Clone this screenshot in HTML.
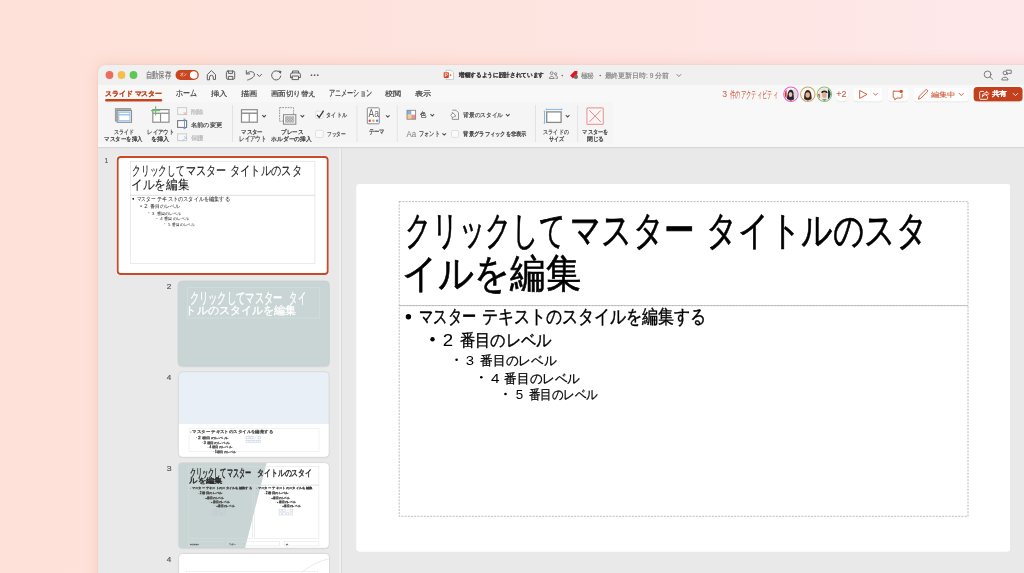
<!DOCTYPE html>
<html><head><meta charset="utf-8">
<style>
html,body{margin:0;padding:0;width:1024px;height:573px;overflow:hidden}
body{background:linear-gradient(90deg,#fee2d9 0%,#fee4df 50%,#fee8ea 100%);font-family:"Liberation Sans",sans-serif;position:relative}
#win{position:absolute;left:98px;top:65px;width:960px;height:540px;border-radius:8px;background:#e9e9e9;box-shadow:0 0 2px 0 rgba(200,100,70,0.22),0 0 14px 2px rgba(220,120,90,0.16)}
svg{position:absolute;left:0;top:0;will-change:transform}
text{font-family:"Liberation Sans",sans-serif}
</style></head>
<body>
<div id="win"></div>
<svg width="1024" height="573" viewBox="0 0 1024 573">
<defs>
<clipPath id="wclip"><rect x="98" y="65" width="960" height="540" rx="8"/></clipPath>
<filter id="bsh" x="-20%" y="-30%" width="140%" height="170%"><feDropShadow dx="0" dy="0.5" stdDeviation="0.6" flood-color="#000" flood-opacity="0.18"/></filter>
<filter id="soft" x="-10%" y="-60%" width="120%" height="220%"><feGaussianBlur stdDeviation="2.2"/></filter>
<filter id="tsh" x="-5%" y="-5%" width="110%" height="112%"><feDropShadow dx="0" dy="0.4" stdDeviation="0.5" flood-color="#000" flood-opacity="0.16"/></filter>
<g id="sm">
<rect x="0" y="0" width="653.5" height="367.4" rx="3" fill="#fff"/>
<rect x="42.7" y="17.6" width="568.8" height="104" fill="none" stroke="#b4b4b4" stroke-width="0.9" stroke-dasharray="2 1.2"/>
<rect x="42.7" y="121.6" width="568.8" height="210.7" fill="none" stroke="#b4b4b4" stroke-width="0.9" stroke-dasharray="2 1.2"/>
<circle cx="51.9" cy="132.8" r="2.7" fill="#000"/>
<circle cx="76" cy="155.3" r="2.2" fill="#000"/>
<circle cx="100.1" cy="175.7" r="1.3" fill="#000"/>
<circle cx="124.8" cy="193.3" r="1.3" fill="#000"/>
<circle cx="149" cy="210" r="1.3" fill="#000"/>
<text x="48.70" y="59.60" font-size="39.70" textLength="160.30" lengthAdjust="spacingAndGlyphs" fill="#000000" stroke="#000000" stroke-width="0.65">クリックして</text>
<text x="213.54" y="59.60" font-size="39.70" textLength="124.72" lengthAdjust="spacingAndGlyphs" fill="#000000" stroke="#000000" stroke-width="0.65">マスター</text>
<text x="349.78" y="59.60" font-size="39.70" textLength="221.31" lengthAdjust="spacingAndGlyphs" fill="#000000" stroke="#000000" stroke-width="0.65">タイトルのスタ</text>
<text x="45.52" y="102.60" font-size="39.70" textLength="178.90" lengthAdjust="spacingAndGlyphs" fill="#000000" stroke="#000000" stroke-width="0.65">イルを編集</text>
<text x="62.58" y="139.40" font-size="19.20" textLength="56.99" lengthAdjust="spacingAndGlyphs" fill="#000000" stroke="#000000" stroke-width="0.4">マスター</text>
<text x="125.80" y="139.40" font-size="19.20" textLength="223.76" lengthAdjust="spacingAndGlyphs" fill="#000000" stroke="#000000" stroke-width="0.4">テキストのスタイルを編集する</text>
<text x="86.17" y="161.90" font-size="16.70" textLength="10.40" lengthAdjust="spacingAndGlyphs" fill="#000000">2</text>
<text x="103.05" y="161.90" font-size="16.70" textLength="91.91" lengthAdjust="spacingAndGlyphs" fill="#000000" stroke="#000000" stroke-width="0.35">番目のレベル</text>
<text x="109.30" y="181.30" font-size="12.80" textLength="8.28" lengthAdjust="spacingAndGlyphs" fill="#000000">3</text>
<text x="123.62" y="181.30" font-size="12.80" textLength="76.25" lengthAdjust="spacingAndGlyphs" fill="#000000" stroke="#000000" stroke-width="0.25">番目のレベル</text>
<text x="134.59" y="198.60" font-size="12.90" textLength="8.51" lengthAdjust="spacingAndGlyphs" fill="#000000">4</text>
<text x="147.83" y="198.60" font-size="12.90" textLength="75.75" lengthAdjust="spacingAndGlyphs" fill="#000000" stroke="#000000" stroke-width="0.25">番目のレベル</text>
<text x="159.36" y="215.40" font-size="12.60" textLength="7.46" lengthAdjust="spacingAndGlyphs" fill="#000000">5</text>
<text x="172.06" y="215.40" font-size="12.60" textLength="69.49" lengthAdjust="spacingAndGlyphs" fill="#000000" stroke="#000000" stroke-width="0.25">番目のレベル</text>
</g>
<g id="smt">
<rect x="0" y="0" width="653.5" height="367.4" rx="3" fill="#fff"/>
<rect x="42.7" y="17.6" width="568.8" height="104" fill="none" stroke="#d8d8d8" stroke-width="1.6"/>
<rect x="42.7" y="121.6" width="568.8" height="210.7" fill="none" stroke="#d8d8d8" stroke-width="1.6"/>
<circle cx="51.9" cy="132.8" r="2.7" fill="#000"/>
<circle cx="76" cy="155.3" r="2.2" fill="#000"/>
<circle cx="100.1" cy="175.7" r="1.3" fill="#000"/>
<circle cx="124.8" cy="193.3" r="1.3" fill="#000"/>
<circle cx="149" cy="210" r="1.3" fill="#000"/>
<text x="48.70" y="59.60" font-size="39.70" textLength="160.30" lengthAdjust="spacingAndGlyphs" fill="#1a1a1a" stroke="#1a1a1a" stroke-width="0.29250000000000004">クリックして</text>
<text x="213.54" y="59.60" font-size="39.70" textLength="124.72" lengthAdjust="spacingAndGlyphs" fill="#1a1a1a" stroke="#1a1a1a" stroke-width="0.29250000000000004">マスター</text>
<text x="349.78" y="59.60" font-size="39.70" textLength="221.31" lengthAdjust="spacingAndGlyphs" fill="#1a1a1a" stroke="#1a1a1a" stroke-width="0.29250000000000004">タイトルのスタ</text>
<text x="45.52" y="102.60" font-size="39.70" textLength="178.90" lengthAdjust="spacingAndGlyphs" fill="#1a1a1a" stroke="#1a1a1a" stroke-width="0.29250000000000004">イルを編集</text>
<text x="62.58" y="139.40" font-size="19.20" textLength="56.99" lengthAdjust="spacingAndGlyphs" fill="#3a3a3a" stroke="#3a3a3a" stroke-width="0.18000000000000002">マスター</text>
<text x="125.80" y="139.40" font-size="19.20" textLength="223.76" lengthAdjust="spacingAndGlyphs" fill="#3a3a3a" stroke="#3a3a3a" stroke-width="0.18000000000000002">テキストのスタイルを編集する</text>
<text x="86.17" y="161.90" font-size="16.70" textLength="10.40" lengthAdjust="spacingAndGlyphs" fill="#3a3a3a">2</text>
<text x="103.05" y="161.90" font-size="16.70" textLength="91.91" lengthAdjust="spacingAndGlyphs" fill="#3a3a3a" stroke="#3a3a3a" stroke-width="0.1575">番目のレベル</text>
<text x="109.30" y="181.30" font-size="12.80" textLength="8.28" lengthAdjust="spacingAndGlyphs" fill="#3a3a3a">3</text>
<text x="123.62" y="181.30" font-size="12.80" textLength="76.25" lengthAdjust="spacingAndGlyphs" fill="#3a3a3a" stroke="#3a3a3a" stroke-width="0.1125">番目のレベル</text>
<text x="134.59" y="198.60" font-size="12.90" textLength="8.51" lengthAdjust="spacingAndGlyphs" fill="#3a3a3a">4</text>
<text x="147.83" y="198.60" font-size="12.90" textLength="75.75" lengthAdjust="spacingAndGlyphs" fill="#3a3a3a" stroke="#3a3a3a" stroke-width="0.1125">番目のレベル</text>
<text x="159.36" y="215.40" font-size="12.60" textLength="7.46" lengthAdjust="spacingAndGlyphs" fill="#3a3a3a">5</text>
<text x="172.06" y="215.40" font-size="12.60" textLength="69.49" lengthAdjust="spacingAndGlyphs" fill="#3a3a3a" stroke="#3a3a3a" stroke-width="0.1125">番目のレベル</text>
</g>
</defs>
<g clip-path="url(#wclip)">
<rect x="98" y="65" width="960" height="20" fill="#f0f0f0"/>
<rect x="98" y="85" width="960" height="62" fill="#f8f8f8"/>
<rect x="98" y="102" width="515" height="41.5" fill="#f5f5f5"/>
<rect x="98" y="147" width="960" height="1" fill="#d6d6d6"/>
<rect x="98" y="148" width="960" height="1" fill="#e5e5e5"/>
<rect x="98" y="149" width="241" height="430" fill="#e9e9e9"/>
<rect x="339" y="149" width="2" height="430" fill="#f1f1f1"/>
<rect x="341" y="149" width="1" height="430" fill="#dadada"/>
<rect x="342" y="149" width="700" height="430" fill="#e9e9e9"/>
<!-- slide 1 thumb -->
<use href="#smt" transform="translate(116.4,155.7) scale(0.3246)"/>
<rect x="117.7" y="157" width="210" height="117" rx="3" fill="none" stroke="#c84a2b" stroke-width="1.8"/>
<!-- slide 2 -->
<rect x="178.2" y="281.1" width="151.1" height="84.9" rx="4" fill="#c9d5d4" stroke="#c9cfcf" stroke-width="0.8" filter="url(#tsh)"/>
<rect x="187.3" y="287.7" width="132.4" height="30.3" fill="none" stroke="#d8dfdf" stroke-width="0.6"/>
<!-- slide 4 -->
<clipPath id="c4"><rect x="178.3" y="371.7" width="150.9" height="85.6" rx="4"/></clipPath>
<rect x="178.3" y="371.7" width="150.9" height="85.6" rx="4" fill="#fff" filter="url(#tsh)"/>
<rect x="178.3" y="371.7" width="150.9" height="52.2" fill="#e8eff6" clip-path="url(#c4)"/>
<rect x="178.3" y="371.7" width="150.9" height="85.6" rx="4" fill="none" stroke="#d3d3d3" stroke-width="0.8"/>
<rect x="189" y="428.6" width="130" height="22.9" fill="none" stroke="#e8e8e8" stroke-width="0.5"/>
<g fill="#555"><circle cx="190.8" cy="432" r="0.5"/><circle cx="196.6" cy="437.5" r="0.45"/><circle cx="202.3" cy="442.7" r="0.4"/><circle cx="208" cy="447.2" r="0.4"/><circle cx="213.6" cy="451.8" r="0.4"/></g>
<g fill="none" stroke="#b9c6d6" stroke-width="0.5">
<rect x="246" y="436.3" width="3" height="2.5"/><rect x="250" y="436.3" width="3" height="2.5"/><path d="M254 438.8 L256.5 436"/><rect x="258" y="436.3" width="2.5" height="2.5"/>
<rect x="246" y="440.2" width="3" height="2.5"/><rect x="250" y="440.2" width="3" height="2.5"/><rect x="254" y="440.2" width="3" height="2.5"/><rect x="258" y="440.2" width="2.5" height="2.5"/>
</g>
<!-- slide 3 -->
<clipPath id="c3"><rect x="178.3" y="462.6" width="151" height="85.7" rx="4"/></clipPath>
<rect x="178.3" y="462.6" width="151" height="85.7" rx="4" fill="#fff" filter="url(#tsh)"/>
<path d="M178.3 462.6 H266.7 L245 548.3 H178.3 Z" fill="#c9d5d4" clip-path="url(#c3)"/>
<rect x="178.3" y="462.6" width="151" height="85.7" rx="4" fill="none" stroke="#d3d3d3" stroke-width="0.8"/>
<g fill="none" stroke="#d9dede" stroke-width="0.45">
<rect x="188.5" y="466.4" width="130.4" height="18.5"/>
<rect x="188.5" y="485.7" width="64.2" height="53"/>
<rect x="254.7" y="485.7" width="64.2" height="53"/>
<rect x="188.5" y="541.5" width="34" height="4.4"/>
<rect x="227.7" y="541.5" width="51.8" height="4.4"/>
<rect x="284.3" y="541.5" width="34.6" height="4.4"/>
</g>
<g fill="#555"><circle cx="190.6" cy="488.2" r="0.4"/><circle cx="198.3" cy="493.4" r="0.35"/><circle cx="203.8" cy="498" r="0.3"/><circle cx="209.4" cy="502" r="0.3"/><circle cx="214.9" cy="505.7" r="0.3"/>
<circle cx="256.6" cy="488.2" r="0.4"/><circle cx="264.3" cy="493.4" r="0.35"/><circle cx="269.8" cy="498" r="0.3"/><circle cx="275.4" cy="502" r="0.3"/><circle cx="280.9" cy="505.7" r="0.3"/></g>
<g fill="none" stroke="#b9c6d6" stroke-width="0.45">
<rect x="213" y="509.2" width="2.6" height="2.2"/><rect x="216.6" y="509.2" width="2.6" height="2.2"/><path d="M220.2 511.4 L222.6 509"/><rect x="224" y="509.2" width="2.2" height="2.2"/>
<rect x="213" y="512.8" width="2.6" height="2.2"/><rect x="216.6" y="512.8" width="2.6" height="2.2"/><rect x="220.2" y="512.8" width="2.6" height="2.2"/><rect x="224" y="512.8" width="2.2" height="2.2"/>
<rect x="279" y="509.2" width="2.6" height="2.2"/><rect x="282.6" y="509.2" width="2.6" height="2.2"/><path d="M286.2 511.4 L288.6 509"/><rect x="290" y="509.2" width="2.2" height="2.2"/>
<rect x="279" y="512.8" width="2.6" height="2.2"/><rect x="282.6" y="512.8" width="2.6" height="2.2"/><rect x="286.2" y="512.8" width="2.6" height="2.2"/><rect x="290" y="512.8" width="2.2" height="2.2"/>
</g>
<!-- slide 4b -->
<clipPath id="c4b"><rect x="178.6" y="553.4" width="150.9" height="60" rx="4"/></clipPath>
<rect x="178.6" y="553.4" width="150.9" height="60" rx="4" fill="#fff" stroke="#d3d3d3" stroke-width="0.8" filter="url(#tsh)"/>
<g clip-path="url(#c4b)"><circle cx="345" cy="625" r="68.2" fill="none" stroke="#dcdcdc" stroke-width="0.6"/></g>
<rect x="186.6" y="571.5" width="130.8" height="6" fill="none" stroke="#e6e6e6" stroke-width="0.5"/>

</g>
<g id="titlebar">
<circle cx="109.5" cy="75" r="3.9" fill="#ee6b5f"/>
<circle cx="121.5" cy="75" r="3.9" fill="#f5be4f"/>
<circle cx="133.5" cy="75" r="3.9" fill="#62c655"/>
<rect x="175.5" y="70" width="23.3" height="10" rx="5" fill="#c9461f"/>
<circle cx="193.7" cy="75" r="3.8" fill="#fff"/>
<g fill="none" stroke="#5f5f5f" stroke-width="1" stroke-linejoin="round" stroke-linecap="round">
<path d="M207.3 79.4 V74.6 L211.4 70.6 L215.5 74.6 V79.4 H213.3 V77.2 A1.9 1.9 0 0 0 209.5 77.2 V79.4 Z"/>
<rect x="226.4" y="71" width="8.3" height="8.3" rx="1.6"/>
<path d="M228.4 71 V73.4 H232.6 V71 M228.3 79.3 V76.4 H232.8 V79.3"/>
<path d="M246.3 70.6 V73.9 H249.6 M246.6 73.7 C249.2 70.6 254.6 70.9 254.4 75 C254.2 77.4 250.5 79.2 247.6 80"/>
<path d="M257.2 74.3 L259.4 76.5 L261.6 74.3"/>
<path d="M279.9 72.6 A4.6 4.6 0 1 0 280.8 76"/>
<path d="M290.6 77.6 V74.4 A1.5 1.5 0 0 1 292.1 72.9 H298.9 A1.5 1.5 0 0 1 300.4 74.4 V77.6 H298.5 M292.5 77.6 H290.6 M292.5 72.9 V71 H298.5 V72.9 M292.5 76 H298.5 V79.6 H292.5 Z"/>
</g>
<path d="M278.2 70.6 L281.4 70.9 L280.9 74 Z" fill="#5f5f5f"/>
<circle cx="311.5" cy="75.2" r="0.85" fill="#5f5f5f"/>
<circle cx="314.6" cy="75.2" r="0.85" fill="#5f5f5f"/>
<circle cx="317.7" cy="75.2" r="0.85" fill="#5f5f5f"/>
<!-- center title -->
<path d="M446.2 70.3 H451 L453.5 72.8 V79.4 H446.2 Z" fill="#fff" stroke="#b8b8b8" stroke-width="0.7"/>
<rect x="443.7" y="72.2" width="5.2" height="5.7" rx="0.8" fill="#d24726"/>
<path d="M445.3 76.8 V73.3 H446.7 A1 1 0 0 1 446.7 75.3 H445.3" fill="none" stroke="#fff" stroke-width="0.7"/>
<path d="M449.9 74 L451.8 75.1 L449.9 76.2 Z" fill="#e0573a"/>
<g fill="none" stroke="#707070" stroke-width="0.8">
<circle cx="551.7" cy="73.2" r="1.4"/><path d="M549.3 78.5 C549.3 75.8 554.1 75.8 554.1 78.5 Z"/>
<circle cx="555.6" cy="73.8" r="1.1"/><path d="M555.2 75.6 C557.2 75.4 557.7 76.8 557.5 78.3 H555.5"/>
</g>
<circle cx="562.3" cy="75.6" r="0.8" fill="#707070"/>
<path d="M570.1 75.6 L574.6 71.1 H577.4 V74 L572.9 78.5 Z" fill="#e81224"/>
<circle cx="575.9" cy="76.9" r="2.1" fill="#6f6f6f"/>
<circle cx="600.2" cy="75.6" r="0.8" fill="#707070"/>
<path d="M676.6 74.2 L678.9 76.5 L681.2 74.2" fill="none" stroke="#777" stroke-width="0.9"/>
<!-- right icons -->
<g fill="none" stroke="#6e6e6e" stroke-width="0.9" stroke-linecap="round">
<circle cx="987.6" cy="74.4" r="3.4"/><path d="M990.1 76.9 L992.6 79.3"/>
<circle cx="1005" cy="72.9" r="1.9"/><path d="M1001.8 79.6 C1001.6 76.3 1008.2 76.3 1008 79.6 Z"/>
<path d="M1006.4 70.2 H1011.2 V73.4 H1008.6 L1007.3 74.5 V73.4 H1006.4"/>
</g>
</g>
<g id="tabrow">
<rect x="105.2" y="99.1" width="57" height="2.4" rx="1.2" fill="#c4441f"/>
<g fill="#4a4a4a" font-size="8.4">
</g>
<!-- avatars -->
<clipPath id="av1"><circle cx="790.9" cy="94.2" r="6.2"/></clipPath>
<clipPath id="av2"><circle cx="807.8" cy="94.2" r="6.2"/></clipPath>
<clipPath id="av3"><circle cx="824.4" cy="94.2" r="6.2"/></clipPath>
<circle cx="790.9" cy="94.2" r="7.2" fill="#fff" stroke="#ea5fcf" stroke-width="1.1"/>
<g clip-path="url(#av1)">
<rect x="784" y="87" width="14" height="15" fill="#f2f2f2"/>
<rect x="784" y="89" width="2.6" height="9" fill="#d8302c"/>
<rect x="793.5" y="88" width="4" height="12" fill="#d9dde2"/>
<path d="M787 101 C787 96 787.8 90 790.6 89.8 C793 89.7 793.8 92 793.6 95 L794.2 101 Z" fill="#2b2326"/>
<ellipse cx="790.5" cy="94.6" rx="1.8" ry="2.5" fill="#e6c2b0"/>
<path d="M787 101 C788 99 793 99 795 101 Z" fill="#3a4a5a"/>
</g>
<circle cx="807.8" cy="94.2" r="7.2" fill="#fff" stroke="#c8a66a" stroke-width="1.1"/>
<g clip-path="url(#av2)">
<rect x="801" y="87" width="14" height="15" fill="#f7f5f2"/>
<path d="M804.2 101 C803.8 95 804.6 90 807.8 90 C811 90 811.8 95 811.6 101 Z" fill="#3a2620"/>
<ellipse cx="807.7" cy="95" rx="2.2" ry="2.8" fill="#e0b298"/>
</g>
<circle cx="824.4" cy="94.2" r="7.2" fill="#fff" stroke="#8dc16b" stroke-width="1.1"/>
<g clip-path="url(#av3)">
<rect x="817.5" y="87" width="14" height="15" fill="#e9e6e2"/>
<rect x="828" y="87" width="4" height="15" fill="#2a3a4e"/>
<rect x="817.5" y="94" width="2.2" height="5" fill="#c8453a"/>
<path d="M821.3 93 C821 89.8 827.6 89.8 827.5 93 Z" fill="#2a211c"/>
<ellipse cx="824.4" cy="95" rx="2.3" ry="2.9" fill="#dcae92"/>
<path d="M820.5 101 C821 99 828 99 828.5 101 Z" fill="#2a3a4e"/>
</g>
<circle cx="841.6" cy="94.2" r="7" fill="#fff" filter="url(#bsh)"/>
<!-- buttons -->
<g filter="url(#bsh)">
<rect x="853.3" y="87.6" width="29.2" height="13.6" rx="3.5" fill="#fff"/>
<rect x="888" y="87.6" width="20" height="13.6" rx="3.5" fill="#fff"/>
<rect x="913.5" y="87.6" width="55.3" height="13.6" rx="3.5" fill="#fff"/>
<rect x="973.7" y="87" width="48.8" height="14.3" rx="3.5" fill="#c4401c"/>
</g>
<g fill="none" stroke="#c9512d" stroke-width="0.9" stroke-linejoin="round" stroke-linecap="round">
<path d="M860 90.6 L867 94.4 L860 98.2 Z"/>
<path d="M873.6 93.3 L875.5 95.2 L877.4 93.3"/>
<path d="M893.2 91.2 H899.5 M902 94 V97 A1 1 0 0 1 901 98 H897 L894.8 99.8 V98 H894.2 A1 1 0 0 1 893.2 97 V92.2 A1 1 0 0 1 894.2 91.2"/>
<path d="M918.6 98.8 L919.2 96.3 L925.5 90 A1 1 0 0 1 927.3 91.8 L921 98.1 Z"/>
<path d="M959.2 93.4 L961.3 95.5 L963.4 93.4"/>
</g>
<circle cx="901.2" cy="91.4" r="1.7" fill="#c9512d"/>
<g fill="none" stroke="#fff" stroke-width="0.9" stroke-linejoin="round" stroke-linecap="round">
<path d="M983.5 91.4 H980.6 A0.9 0.9 0 0 0 979.7 92.3 V98.4 A0.9 0.9 0 0 0 980.6 99.3 H986.7 A0.9 0.9 0 0 0 987.6 98.4 V96.8"/>
<path d="M982.3 96.8 C982.3 93.8 984 92.8 986.4 92.8 V91.2 L988.8 93.6 L986.4 96 V94.5 C984.6 94.5 983.3 95.2 982.3 96.8"/>
<path d="M1013.2 93.5 L1015.4 95.7 L1017.6 93.5"/>
</g>
</g>
<g id="ribbon">
<!-- group1 -->
<rect x="115.4" y="108.6" width="15.2" height="12.4" fill="#b4b4b4" stroke="#9b9b9b" stroke-width="1"/>
<rect x="117.2" y="110.5" width="14.3" height="11.8" fill="#fff" stroke="#8e8e8e" stroke-width="1.1"/>
<rect x="118.2" y="111.5" width="12.3" height="9.9" fill="#92bfe9"/>
<rect x="119.3" y="112.8" width="10.1" height="1.3" fill="#fff"/>
<rect x="119.3" y="115.4" width="10.1" height="4.8" fill="#fff"/>
<rect x="152.8" y="109.6" width="16.2" height="12.6" fill="#fff" stroke="#8e8e8e" stroke-width="1.2"/>
<rect x="152.8" y="112.6" width="16.2" height="1.3" fill="#8e8e8e"/>
<rect x="160" y="113" width="1.1" height="9" fill="#8e8e8e"/>
<path d="M151 110.7 H160.2 M155.6 106.2 V115.4" stroke="#6cc070" stroke-width="1.2"/>
<g fill="#474747" font-size="6.7">
</g>
<rect x="177.6" y="107.6" width="9" height="6.8" fill="#f7f7f7" stroke="#cdcdcd" stroke-width="1"/>
<path d="M183.6 112 L186.6 115.2 M186.6 112 L183.6 115.2" stroke="#f0a3a3" stroke-width="0.8"/>
<rect x="177.6" y="120.6" width="9" height="6.8" fill="#fff" stroke="#7a7a7a" stroke-width="1.1"/>
<path d="M184.5 119.2 V128.6 M183.4 119.2 H185.6 M183.4 128.6 H185.6" stroke="#5b9bd5" stroke-width="0.9"/>
<rect x="177.6" y="133.8" width="9" height="6.8" fill="#f7f7f7" stroke="#cdcdcd" stroke-width="1"/>
<path d="M182.3 141 L186.6 136.8 M184.2 136.2 L187 139" stroke="#9cc3e8" stroke-width="0.9"/>
<rect x="232.2" y="105" width="0.8" height="37" fill="#dedede"/>
<!-- group2 -->
<rect x="241.5" y="109.7" width="15.8" height="12.5" fill="#fff" stroke="#8a8a8a" stroke-width="1.2"/>
<rect x="241.5" y="112.5" width="15.8" height="1.4" fill="#8a8a8a"/>
<rect x="248.7" y="113" width="1.1" height="9" fill="#8a8a8a"/>
<path d="M262.3 115.1 L264.1 116.9 L265.9 115.1" fill="none" stroke="#4a4a4a" stroke-width="1.05"/>
<rect x="279.6" y="107.6" width="14" height="13.6" fill="none" stroke="#8e8e8e" stroke-width="0.9" stroke-dasharray="1.8 0.9"/>
<rect x="283.5" y="114.7" width="12.3" height="9.5" fill="#fff" stroke="#8a8a8a" stroke-width="1.1"/>
<pattern id="chk" width="1.6" height="1.6" patternUnits="userSpaceOnUse"><rect width="1.6" height="1.6" fill="#e2e2e2"/><rect width="0.8" height="0.8" fill="#8a8a8a"/><rect x="0.8" y="0.8" width="0.8" height="0.8" fill="#8a8a8a"/></pattern>
<rect x="285" y="116.2" width="9.3" height="6.5" fill="url(#chk)"/>
<path d="M300.6 115.1 L302.4 116.9 L304.2 115.1" fill="none" stroke="#4a4a4a" stroke-width="1.05"/>
<g fill="#474747" font-size="6.7">
</g>
<rect x="315.6" y="111.2" width="7.6" height="7.2" rx="1.2" fill="#fafafa" stroke="#d6d6d6" stroke-width="0.7"/>
<path d="M317 114.8 L319.2 117.4 L323.6 110.6" fill="none" stroke="#333" stroke-width="1.2"/>
<rect x="315.6" y="130.3" width="7.6" height="7.2" rx="1.2" fill="#fafafa" stroke="#d6d6d6" stroke-width="0.7"/>
<rect x="356.6" y="105" width="0.8" height="37" fill="#dedede"/>
<!-- group3 -->
<rect x="367.3" y="107.8" width="12" height="16" rx="0.8" fill="#fff" stroke="#8a8a8a" stroke-width="1"/>
<circle cx="369.7" cy="120.8" r="1.2" fill="#e04848"/>
<circle cx="373.4" cy="120.8" r="1.2" fill="#f0a040"/>
<circle cx="377.1" cy="120.8" r="1.2" fill="#4a8fd8"/>
<path d="M386 115.3 L387.8 117.1 L389.6 115.3" fill="none" stroke="#4a4a4a" stroke-width="1.05"/>
<rect x="396.8" y="105" width="0.8" height="37" fill="#dedede"/>
<!-- group4 -->
<rect x="407" y="110.3" width="8.6" height="8.9" fill="#fff"/>
<rect x="407" y="110.3" width="4.3" height="4.4" fill="#7fb3e6"/>
<rect x="407" y="114.7" width="4.3" height="4.5" fill="#f4d27c"/>
<rect x="411.3" y="114.7" width="4.3" height="4.5" fill="#ee8f98"/>
<rect x="407" y="110.3" width="8.6" height="8.9" fill="none" stroke="#888" stroke-width="0.9"/>
<path d="M430.5 114.2 L432.3 116 L434.1 114.2" fill="none" stroke="#4a4a4a" stroke-width="1.05"/>
<path d="M452.3 110.2 H456 L458.5 112.7 V119.4 H452.3 V116.4 M452.3 113.4 V112" fill="none" stroke="#7a7a7a" stroke-width="0.8"/>
<path d="M450.6 115.3 L453 112.9 L455.4 115.3 L453 117.7 Z" fill="#fff" stroke="#7a7a7a" stroke-width="0.8"/>
<circle cx="455.2" cy="116.3" r="0.7" fill="#5b9bd5"/>
<g fill="#474747" font-size="6.7">
</g>
<path d="M506 114.2 L507.8 116 L509.6 114.2" fill="none" stroke="#4a4a4a" stroke-width="1.05"/>
<path d="M442.4 133.3 L444.2 135.1 L446 133.3" fill="none" stroke="#4a4a4a" stroke-width="1.05"/>
<rect x="451.5" y="130.5" width="7" height="6.9" rx="1.2" fill="#fafafa" stroke="#d6d6d6" stroke-width="0.7"/>
<rect x="535.2" y="105" width="0.8" height="37" fill="#dedede"/>
<!-- group5 -->
<path d="M546.3 109.4 H561.8 M546.3 108.6 V110.2 M561.8 108.6 V110.2 M544.5 111.2 V123.1 M543.7 111.2 H545.3 M543.7 123.1 H545.3" fill="none" stroke="#69a6e0" stroke-width="0.8"/>
<rect x="546.7" y="111.9" width="14.4" height="10.5" fill="#fff" stroke="#8a8a8a" stroke-width="1.3"/>
<path d="M565.8 115.2 L567.6 117 L569.4 115.2" fill="none" stroke="#4a4a4a" stroke-width="1.05"/>
<g fill="#474747" font-size="6.7">
</g>
<rect x="577.3" y="105" width="0.8" height="37" fill="#dedede"/>
<rect x="586.9" y="107.9" width="16.4" height="16.5" rx="1" fill="#fdf6f6" stroke="#eaa0a0" stroke-width="1.2"/>
<path d="M589.4 110.4 L600.8 121.9 M600.8 110.4 L589.4 121.9" stroke="#e67878" stroke-width="0.9"/>
</g>

<rect x="356.5" y="184" width="653.5" height="367.4" rx="3" fill="#fff"/>
<use href="#sm" transform="translate(356.5,184)"/>

<text x="145.50" y="78.40" font-size="8.86" textLength="25.50" lengthAdjust="spacingAndGlyphs" fill="#6a6a6a" stroke="#6a6a6a" stroke-width="0.1">自動保存</text>
<g transform="translate(179.58,76.49) scale(0.2317)" filter="url(#soft)"><text x="0" y="0" font-size="20" textLength="31.85" lengthAdjust="spacingAndGlyphs" fill="#ffffff">オン</text></g>
<text x="458.87" y="77.29" font-size="6.24" textLength="85.02" lengthAdjust="spacingAndGlyphs" fill="#363636" font-weight="bold" stroke="#363636" stroke-width="0.08">増幅するように設計されています</text>
<text x="580.64" y="77.64" font-size="6.88" textLength="12.96" lengthAdjust="spacingAndGlyphs" fill="#8a8a8a" stroke="#8a8a8a" stroke-width="0.2">極秘</text>
<text x="604.56" y="77.54" font-size="6.60" textLength="64.51" lengthAdjust="spacingAndGlyphs" fill="#8a8a8a" stroke="#8a8a8a" stroke-width="0.2">最終更新日時: 9 分前</text>
<text x="104.56" y="95.53" font-size="7.31" textLength="57.91" lengthAdjust="spacingAndGlyphs" fill="#c4441f" font-weight="bold" stroke="#c4441f" stroke-width="0.08">スライド マスター</text>
<text x="175.93" y="95.92" font-size="8.75" textLength="20.89" lengthAdjust="spacingAndGlyphs" fill="#474747" stroke="#474747" stroke-width="0.2">ホーム</text>
<text x="210.62" y="95.73" font-size="7.14" textLength="16.72" lengthAdjust="spacingAndGlyphs" fill="#474747" stroke="#474747" stroke-width="0.2">挿入</text>
<text x="240.92" y="95.77" font-size="7.37" textLength="16.41" lengthAdjust="spacingAndGlyphs" fill="#474747" stroke="#474747" stroke-width="0.2">描画</text>
<text x="270.63" y="95.66" font-size="7.14" textLength="45.27" lengthAdjust="spacingAndGlyphs" fill="#474747" stroke="#474747" stroke-width="0.2">画面切り替え</text>
<text x="329.10" y="96.00" font-size="8.86" textLength="42.60" lengthAdjust="spacingAndGlyphs" fill="#474747" stroke="#474747" stroke-width="0.2">アニメーション</text>
<text x="385.20" y="95.78" font-size="7.29" textLength="16.08" lengthAdjust="spacingAndGlyphs" fill="#474747" stroke="#474747" stroke-width="0.2">校閲</text>
<text x="415.06" y="95.84" font-size="7.37" textLength="16.27" lengthAdjust="spacingAndGlyphs" fill="#474747" stroke="#474747" stroke-width="0.2">表示</text>
<text x="722.35" y="97.12" font-size="8.45" textLength="4.85" lengthAdjust="spacingAndGlyphs" fill="#cf5a3c">3</text>
<text x="729.90" y="97.60" font-size="9.86" textLength="48.10" lengthAdjust="spacingAndGlyphs" fill="#cf5a3c" stroke="#cf5a3c" stroke-width="0.05">件のアクティビティ</text>
<text x="836.35" y="97.40" font-size="8.57" textLength="10.20" lengthAdjust="spacingAndGlyphs" fill="#d05a3a" stroke="#d05a3a" stroke-width="0.1">+2</text>
<text x="930.70" y="96.71" font-size="7.45" textLength="25.19" lengthAdjust="spacingAndGlyphs" fill="#c9512d" stroke="#c9512d" stroke-width="0.05">編集中</text>
<text x="991.70" y="96.49" font-size="7.25" textLength="15.45" lengthAdjust="spacingAndGlyphs" fill="#ffffff" font-weight="bold" stroke="#ffffff" stroke-width="0.08">共有</text>
<text x="113.71" y="133.69" font-size="6.21" textLength="19.82" lengthAdjust="spacingAndGlyphs" fill="#474747" stroke="#474747" stroke-width="0.2">スライド</text>
<g transform="translate(104.27,140.65) scale(0.2980)" filter="url(#soft)"><text x="0" y="0" font-size="20" textLength="128.02" lengthAdjust="spacingAndGlyphs" fill="#474747" stroke="#474747" stroke-width="1.01">マスターを挿入</text></g>
<text x="147.21" y="133.69" font-size="6.21" textLength="26.86" lengthAdjust="spacingAndGlyphs" fill="#474747" stroke="#474747" stroke-width="0.2">レイアウト</text>
<g transform="translate(150.51,140.65) scale(0.2980)" filter="url(#soft)"><text x="0" y="0" font-size="20" textLength="63.21" lengthAdjust="spacingAndGlyphs" fill="#474747" stroke="#474747" stroke-width="1.01">を挿入</text></g>
<text x="190.67" y="113.62" font-size="6.25" textLength="12.89" lengthAdjust="spacingAndGlyphs" fill="#b9b9b9" stroke="#b9b9b9" stroke-width="0.2">削除</text>
<text x="190.67" y="126.56" font-size="6.43" textLength="31.91" lengthAdjust="spacingAndGlyphs" fill="#474747" stroke="#474747" stroke-width="0.2">名前の変更</text>
<text x="190.80" y="139.89" font-size="6.25" textLength="12.82" lengthAdjust="spacingAndGlyphs" fill="#b9b9b9" stroke="#b9b9b9" stroke-width="0.2">保護</text>
<g transform="translate(241.17,133.80) scale(0.3000)" filter="url(#soft)"><text x="0" y="0" font-size="20" textLength="72.36" lengthAdjust="spacingAndGlyphs" fill="#474747" stroke="#474747" stroke-width="1.00">マスター</text></g>
<text x="239.20" y="140.75" font-size="6.55" textLength="27.08" lengthAdjust="spacingAndGlyphs" fill="#474747" stroke="#474747" stroke-width="0.2">レイアウト</text>
<g transform="translate(281.01,134.02) scale(0.2812)" filter="url(#soft)"><text x="0" y="0" font-size="20" textLength="78.60" lengthAdjust="spacingAndGlyphs" fill="#474747" stroke="#474747" stroke-width="1.07">プレース</text></g>
<g transform="translate(271.27,140.73) scale(0.2908)" filter="url(#soft)"><text x="0" y="0" font-size="20" textLength="138.77" lengthAdjust="spacingAndGlyphs" fill="#474747" stroke="#474747" stroke-width="1.03">ホルダーの挿入</text></g>
<text x="326.40" y="116.73" font-size="6.44" textLength="20.24" lengthAdjust="spacingAndGlyphs" fill="#474747" stroke="#474747" stroke-width="0.2">タイトル</text>
<text x="326.89" y="135.83" font-size="6.44" textLength="18.83" lengthAdjust="spacingAndGlyphs" fill="#474747" stroke="#474747" stroke-width="0.2">フッター</text>
<text x="368.53" y="133.94" font-size="6.92" textLength="15.94" lengthAdjust="spacingAndGlyphs" fill="#474747" stroke="#474747" stroke-width="0.2">テーマ</text>
<text x="368.60" y="116.80" font-size="10.00" textLength="10.33" lengthAdjust="spacingAndGlyphs" fill="#6a6a6a">Aa</text>
<text x="420.07" y="116.96" font-size="6.74" textLength="6.35" lengthAdjust="spacingAndGlyphs" fill="#474747" stroke="#474747" stroke-width="0.2">色</text>
<text x="463.39" y="116.75" font-size="6.33" textLength="39.68" lengthAdjust="spacingAndGlyphs" fill="#474747" stroke="#474747" stroke-width="0.2">背景のスタイル</text>
<text x="406.50" y="136.72" font-size="8.29" textLength="9.63" lengthAdjust="spacingAndGlyphs" fill="#7a7a7a">Aa</text>
<text x="419.25" y="135.91" font-size="6.82" textLength="20.35" lengthAdjust="spacingAndGlyphs" fill="#474747" stroke="#474747" stroke-width="0.2">フォント</text>
<g transform="translate(463.40,135.86) scale(0.2929)" filter="url(#soft)"><text x="0" y="0" font-size="20" textLength="216.14" lengthAdjust="spacingAndGlyphs" fill="#474747" stroke="#474747" stroke-width="1.02">背景グラフィックを非表示</text></g>
<text x="543.40" y="133.89" font-size="6.21" textLength="25.19" lengthAdjust="spacingAndGlyphs" fill="#474747" stroke="#474747" stroke-width="0.2">スライドの</text>
<g transform="translate(548.60,140.80) scale(0.2872)" filter="url(#soft)"><text x="0" y="0" font-size="20" textLength="52.74" lengthAdjust="spacingAndGlyphs" fill="#474747" stroke="#474747" stroke-width="1.04">サイズ</text></g>
<g transform="translate(582.39,133.75) scale(0.2967)" filter="url(#soft)"><text x="0" y="0" font-size="20" textLength="87.36" lengthAdjust="spacingAndGlyphs" fill="#474747" stroke="#474747" stroke-width="1.01">マスターを</text></g>
<g transform="translate(586.75,140.73) scale(0.2903)" filter="url(#soft)"><text x="0" y="0" font-size="20" textLength="60.31" lengthAdjust="spacingAndGlyphs" fill="#474747" stroke="#474747" stroke-width="1.03">閉じる</text></g>
<text x="104.72" y="163.00" font-size="6.67" textLength="3.36" lengthAdjust="spacingAndGlyphs" fill="#5a5a5a" stroke="#5a5a5a" stroke-width="0.2">1</text>
<text x="166.89" y="289.30" font-size="7.29" textLength="4.60" lengthAdjust="spacingAndGlyphs" fill="#5a5a5a" stroke="#5a5a5a" stroke-width="0.2">2</text>
<text x="166.84" y="380.00" font-size="7.57" textLength="4.47" lengthAdjust="spacingAndGlyphs" fill="#5a5a5a" stroke="#5a5a5a" stroke-width="0.2">4</text>
<text x="166.85" y="470.92" font-size="8.03" textLength="4.85" lengthAdjust="spacingAndGlyphs" fill="#5a5a5a" stroke="#5a5a5a" stroke-width="0.2">3</text>
<text x="166.84" y="561.50" font-size="7.43" textLength="4.47" lengthAdjust="spacingAndGlyphs" fill="#5a5a5a" stroke="#5a5a5a" stroke-width="0.2">4</text>
<text x="189.50" y="303.40" font-size="15.43" textLength="93.00" lengthAdjust="spacingAndGlyphs" fill="#ffffff" stroke="#ffffff" stroke-width="0.3">クリックしてマスター</text>
<text x="289.30" y="303.40" font-size="15.43" textLength="16.50" lengthAdjust="spacingAndGlyphs" fill="#ffffff" stroke="#ffffff" stroke-width="0.3">タイ</text>
<text x="185.48" y="313.85" font-size="10.93" textLength="110.46" lengthAdjust="spacingAndGlyphs" fill="#ffffff" stroke="#ffffff" stroke-width="0.3">トルのスタイルを編集</text>
<g transform="translate(192.25,433.10) scale(0.1850)" filter="url(#soft)"><text x="0" y="0" font-size="20" textLength="437.26" lengthAdjust="spacingAndGlyphs" fill="#555555" stroke="#555555" stroke-width="1.62">マスター テキストのスタイルを編集する</text></g>
<g transform="translate(197.98,438.60) scale(0.1650)" filter="url(#soft)"><text x="0" y="0" font-size="20" textLength="180.99" lengthAdjust="spacingAndGlyphs" fill="#555555" stroke="#555555" stroke-width="1.82">2 番目のレベル</text></g>
<g transform="translate(203.65,443.70) scale(0.1400)" filter="url(#soft)"><text x="0" y="0" font-size="20" textLength="184.84" lengthAdjust="spacingAndGlyphs" fill="#555555" stroke="#555555" stroke-width="2.14">3 番目のレベル</text></g>
<g transform="translate(209.44,448.20) scale(0.1400)" filter="url(#soft)"><text x="0" y="0" font-size="20" textLength="159.82" lengthAdjust="spacingAndGlyphs" fill="#555555" stroke="#555555" stroke-width="2.14">4 番目のレベル</text></g>
<g transform="translate(214.88,452.80) scale(0.1400)" filter="url(#soft)"><text x="0" y="0" font-size="20" textLength="151.62" lengthAdjust="spacingAndGlyphs" fill="#555555" stroke="#555555" stroke-width="2.14">5 番目のレベル</text></g>
<text x="189.60" y="476.90" font-size="11.57" textLength="61.80" lengthAdjust="spacingAndGlyphs" fill="#2a2a2a" stroke="#2a2a2a" stroke-width="0.4">クリックしてマスター</text>
<text x="257.09" y="475.55" font-size="9.00" textLength="54.99" lengthAdjust="spacingAndGlyphs" fill="#2a2a2a" stroke="#2a2a2a" stroke-width="0.4">タイトルのスタイ</text>
<text x="189.35" y="483.23" font-size="7.32" textLength="33.48" lengthAdjust="spacingAndGlyphs" fill="#2a2a2a" stroke="#2a2a2a" stroke-width="0.4">ルを編集</text>
<g transform="translate(191.74,489.20) scale(0.1550)" filter="url(#soft)"><text x="0" y="0" font-size="20" textLength="387.99" lengthAdjust="spacingAndGlyphs" fill="#444444" stroke="#444444" stroke-width="1.94">マスター テキストのスタイルを編集する</text></g>
<g transform="translate(199.84,494.40) scale(0.1400)" filter="url(#soft)"><text x="0" y="0" font-size="20" textLength="162.69" lengthAdjust="spacingAndGlyphs" fill="#444444" stroke="#444444" stroke-width="2.14">2 番目のレベル</text></g>
<g transform="translate(205.39,498.90) scale(0.1250)" filter="url(#soft)"><text x="0" y="0" font-size="20" textLength="149.60" lengthAdjust="spacingAndGlyphs" fill="#444444" stroke="#444444" stroke-width="2.40">3 番目のレベル</text></g>
<g transform="translate(210.95,502.90) scale(0.1250)" filter="url(#soft)"><text x="0" y="0" font-size="20" textLength="151.59" lengthAdjust="spacingAndGlyphs" fill="#444444" stroke="#444444" stroke-width="2.40">4 番目のレベル</text></g>
<g transform="translate(216.39,506.60) scale(0.1250)" filter="url(#soft)"><text x="0" y="0" font-size="20" textLength="146.37" lengthAdjust="spacingAndGlyphs" fill="#444444" stroke="#444444" stroke-width="2.40">5 番目のレベル</text></g>
<g transform="translate(257.73,489.20) scale(0.1550)" filter="url(#soft)"><text x="0" y="0" font-size="20" textLength="353.49" lengthAdjust="spacingAndGlyphs" fill="#444444" stroke="#444444" stroke-width="1.94">マスター テキストのスタイルを編集</text></g>
<g transform="translate(265.84,494.40) scale(0.1400)" filter="url(#soft)"><text x="0" y="0" font-size="20" textLength="162.69" lengthAdjust="spacingAndGlyphs" fill="#444444" stroke="#444444" stroke-width="2.14">2 番目のレベル</text></g>
<g transform="translate(271.39,498.90) scale(0.1250)" filter="url(#soft)"><text x="0" y="0" font-size="20" textLength="149.60" lengthAdjust="spacingAndGlyphs" fill="#444444" stroke="#444444" stroke-width="2.40">3 番目のレベル</text></g>
<g transform="translate(276.95,502.90) scale(0.1250)" filter="url(#soft)"><text x="0" y="0" font-size="20" textLength="151.59" lengthAdjust="spacingAndGlyphs" fill="#444444" stroke="#444444" stroke-width="2.40">4 番目のレベル</text></g>
<g transform="translate(282.39,506.60) scale(0.1250)" filter="url(#soft)"><text x="0" y="0" font-size="20" textLength="146.37" lengthAdjust="spacingAndGlyphs" fill="#444444" stroke="#444444" stroke-width="2.40">5 番目のレベル</text></g>
<g transform="translate(190.10,544.50) scale(0.1200)" filter="url(#soft)"><text x="0" y="0" font-size="20" textLength="71.64" lengthAdjust="spacingAndGlyphs" fill="#666666" stroke="#666666" stroke-width="2.50">8/18/20</text></g>
<g transform="translate(228.81,544.50) scale(0.1200)" filter="url(#soft)"><text x="0" y="0" font-size="20" textLength="57.85" lengthAdjust="spacingAndGlyphs" fill="#666666" stroke="#666666" stroke-width="2.50">フッター</text></g>
<g transform="translate(286.00,544.50) scale(0.1200)" filter="url(#soft)"><text x="0" y="0" font-size="20" textLength="16.86" lengthAdjust="spacingAndGlyphs" fill="#666666" stroke="#666666" stroke-width="2.50">#</text></g>
</svg>
</body></html>
